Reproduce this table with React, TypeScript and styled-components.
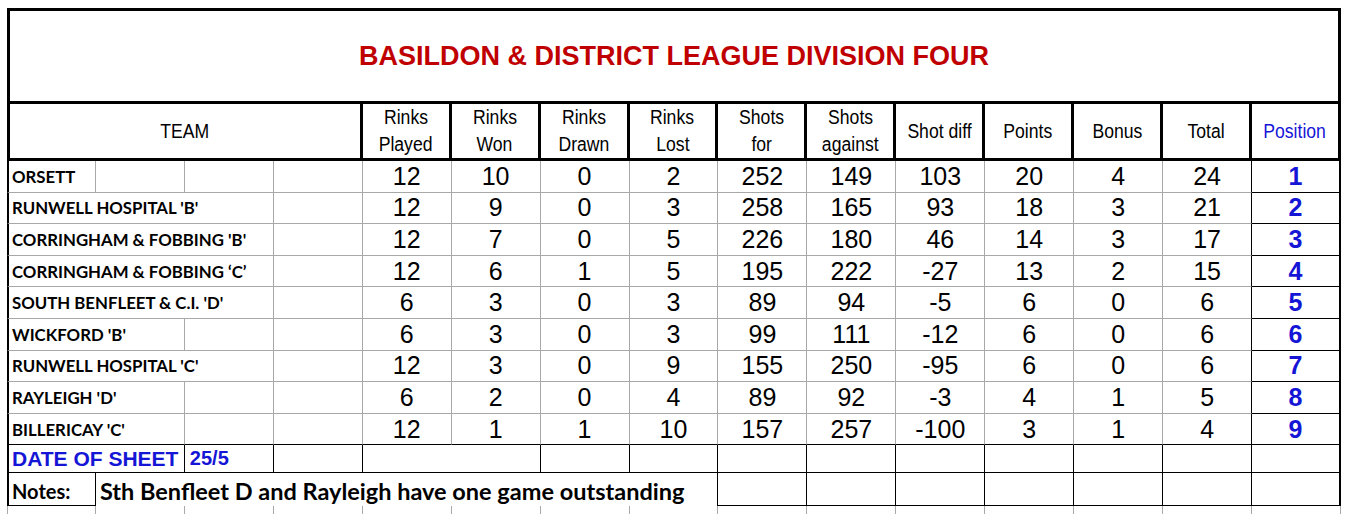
import React from 'react';
import styled, { createGlobalStyle } from 'styled-components';

const GRAY = '#a8a8a8';
const BLUE = '#1515d6';

const HEADINGS = [
  ['Rinks', 'Played'],
  ['Rinks', 'Won'],
  ['Rinks', 'Drawn'],
  ['Rinks', 'Lost'],
  ['Shots', 'for'],
  ['Shots', 'against'],
  ['Shot diff'],
  ['Points'],
  ['Bonus'],
  ['Total'],
];

const TEAMS = [
  { name: 'ORSETT', span: 1, stats: [12, 10, 0, 2, 252, 149, 103, 20, 4, 24] },
  { name: "RUNWELL HOSPITAL 'B'", span: 3, stats: [12, 9, 0, 3, 258, 165, 93, 18, 3, 21] },
  { name: "CORRINGHAM & FOBBING 'B'", span: 3, stats: [12, 7, 0, 5, 226, 180, 46, 14, 3, 17] },
  { name: 'CORRINGHAM & FOBBING \u2018C\u2019', span: 3, stats: [12, 6, 1, 5, 195, 222, -27, 13, 2, 15] },
  { name: "SOUTH BENFLEET & C.I. 'D'", span: 3, stats: [6, 3, 0, 3, 89, 94, -5, 6, 0, 6] },
  { name: "WICKFORD 'B'", span: 2, stats: [6, 3, 0, 3, 99, 111, -12, 6, 0, 6] },
  { name: "RUNWELL HOSPITAL 'C'", span: 3, stats: [12, 3, 0, 9, 155, 250, -95, 6, 0, 6] },
  { name: "RAYLEIGH 'D'", span: 2, stats: [6, 2, 0, 4, 89, 92, -3, 4, 1, 5] },
  { name: "BILLERICAY 'C'", span: 2, stats: [12, 1, 1, 10, 157, 257, -100, 3, 1, 4] },
];

type Kind = 'gray' | 'black' | 'edge' | 'none';

const line = (kind?: Kind) => {
  if (kind === 'black') return '1px solid #000';
  if (kind === 'edge') return '2px solid #000';
  if (kind === 'none') return 'none';
  return `1px solid ${GRAY}`;
};

type Lines = {
  $span?: number;
  $left?: Kind;
  $right?: Kind;
  $bottom?: Kind;
};

const App = () => {
  return (
    <>
      <GlobalStyle />
      <Sheet>
        <Title>BASILDON &amp; DISTRICT LEAGUE DIVISION FOUR</Title>

        <HeadCell $span={4} $first>
          <HeadText>TEAM</HeadText>
        </HeadCell>
        {HEADINGS.map((h) => (
          <HeadCell key={h.join(' ')}>
            {h.map((part) => (
              <HeadText key={part}>{part}</HeadText>
            ))}
          </HeadCell>
        ))}
        <HeadCell $blue>
          <HeadText>Position</HeadText>
        </HeadCell>

        {TEAMS.map((team, i) => {
          const last = i === TEAMS.length - 1;
          const bottom = last ? 'black' : 'gray';
          return (
            <React.Fragment key={team.name}>
              <TeamCell $span={team.span} $left="edge" $bottom={bottom}>
                {team.name}
              </TeamCell>
              {Array.from({ length: 4 - team.span }).map((_, k) => (
                <Cell key={k} $bottom={bottom} />
              ))}
              {team.stats.map((n, k) => (
                <NumCell key={k} $bottom={bottom} $right={k === 9 ? 'black' : 'gray'}>
                  {n}
                </NumCell>
              ))}
              <PosCell $right="edge" $bottom="black">
                {i + 1}
              </PosCell>
            </React.Fragment>
          );
        })}

        <DateLabel $span={2} $left="edge" $right="black" $bottom="black">
          DATE OF SHEET
        </DateLabel>
        <DateValue $right="black" $bottom="black">
          25/5
        </DateValue>
        <Cell $right="black" $bottom="black" />
        <Cell $span={2} $right="black" $bottom="black" />
        {Array.from({ length: 9 }).map((_, k) => (
          <Cell key={k} $right={k === 8 ? 'edge' : 'black'} $bottom="black" />
        ))}

        <NoteLabel $left="edge" $right="black" $bottom="black">
          Notes:
        </NoteLabel>
        <NoteText $span={7} $right="black" $bottom="none">
          Sth Benfleet D and Rayleigh have one game outstanding
        </NoteText>
        {Array.from({ length: 7 }).map((_, k) => (
          <Cell key={k} $right={k === 6 ? 'edge' : 'black'} $bottom="black" />
        ))}

        {Array.from({ length: 15 }).map((_, k) => (
          <Cell key={k} $left={k === 0 ? 'gray' : 'none'} $bottom="none" />
        ))}
      </Sheet>
    </>
  );
};

export default App;

const GlobalStyle = createGlobalStyle`
  html, body {
    margin: 0;
    padding: 0;
    background: #fff;
    overflow: hidden;
  }
`;

const Sheet = styled.div`
  display: grid;
  grid-template-columns: repeat(15, 1fr);
  grid-template-rows: 96px 57px repeat(9, 31.6px) 28px 33px 9px;
  width: 1334px;
  margin: 8px 0 0 7px;
  font-family: 'Liberation Sans', Arial, sans-serif;
  color: #000;
`;

const Title = styled.h1`
  grid-column: 1 / -1;
  margin: 0;
  box-sizing: border-box;
  border: 3px solid #000;
  display: flex;
  align-items: center;
  justify-content: center;
  font-size: 27px;
  font-weight: 700;
  color: #c00000;
`;

const HeadCell = styled.div<{ $span?: number; $first?: boolean; $blue?: boolean }>`
  grid-column: span ${(p) => p.$span ?? 1};
  box-sizing: border-box;
  border-right: 3px solid #000;
  border-bottom: 3px solid #000;
  border-left: ${(p) => (p.$first ? '3px solid #000' : 'none')};
  display: flex;
  flex-direction: column;
  align-items: center;
  justify-content: center;
  font-size: 20px;
  line-height: 27px;
  color: ${(p) => (p.$blue ? BLUE : '#000')};
`;

/* the sheet's header text is printed slightly condensed */
const HeadText = styled.span`
  display: inline-block;
  white-space: nowrap;
  transform: scaleX(0.88);
`;

const Cell = styled.div<Lines>`
  grid-column: span ${(p) => p.$span ?? 1};
  box-sizing: border-box;
  border-left: ${(p) => line(p.$left ?? 'none')};
  border-right: ${(p) => line(p.$right)};
  border-bottom: ${(p) => line(p.$bottom)};
  display: flex;
  align-items: center;
  min-width: 0;
  white-space: nowrap;
  overflow: hidden;
`;

const TeamCell = styled(Cell)`
  padding-left: 3px;
  font-family: Lato, 'Noto Sans', sans-serif;
  font-weight: 700;
  font-size: 16.8px;
`;

const NumCell = styled(Cell)`
  justify-content: center;
  font-size: 25px;
`;

const PosCell = styled(NumCell)`
  font-weight: 700;
  color: ${BLUE};
`;

const DateLabel = styled(Cell)`
  padding-left: 3px;
  font-size: 21px;
  font-weight: 700;
  color: ${BLUE};
`;

const DateValue = styled(Cell)`
  padding-left: 5px;
  font-size: 20px;
  font-weight: 700;
  color: ${BLUE};
`;

const NoteLabel = styled(Cell)`
  padding: 4px 0 0 3px;
  font-family: Lato, 'Noto Sans', sans-serif;
  font-weight: 700;
  font-size: 20px;
`;

const NoteText = styled(Cell)`
  padding: 2px 0 0 4px;
  overflow: visible;
  font-family: Lato, 'Noto Sans', sans-serif;
  font-weight: 700;
  font-size: 23.5px;
`;
